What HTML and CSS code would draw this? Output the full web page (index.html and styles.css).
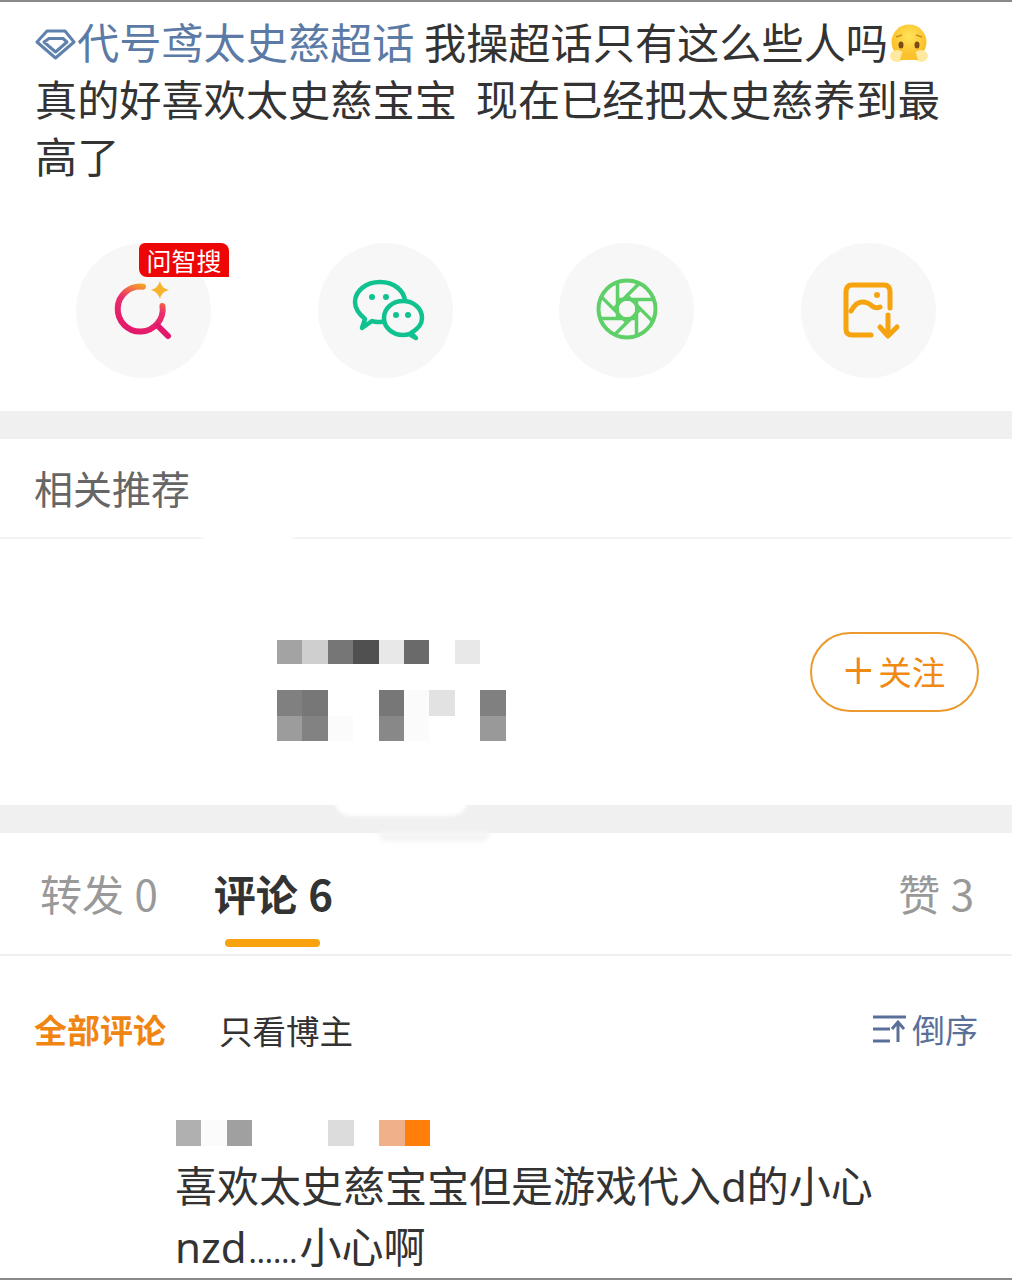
FILE: index.html
```html
<!DOCTYPE html>
<html lang="zh-CN">
<head>
    <meta charset="UTF-8">
    <meta name="viewport" content="width=device-width, initial-scale=1.0">
    <title>代号鸢太史慈超话</title>
    <link rel="stylesheet" href="styles.css">
</head>
<body>
    <div class="page">
        <!-- Post text -->
        <p class="post">
            <span class="topic"><svg class="topic-icon" viewBox="36 24 42 36"><path d="M48 30H66L75 41L56.500 57L38 41Z"/><path d="M50 37.500H64L68 41L56.500 51L45 41Z"/></svg>代号鸢太史慈超话</span>&nbsp;我操超话只有这么些人吗<svg class="emoji" viewBox="0 0 42 42"><defs><radialGradient id="face" cx="50%" cy="35%" r="65%"><stop offset="0" stop-color="#ffe45c"/><stop offset="1" stop-color="#f9b81c"/></radialGradient></defs><circle cx="21" cy="18" r="17.500" fill="url(#face)"/><ellipse cx="13" cy="21" rx="2.500" ry="3.500" fill="#7a4a14"/><ellipse cx="29" cy="21" rx="2.500" ry="3.500" fill="#7a4a14"/><path d="M8 13L14 11M34 13L28 11" stroke="#c98a1c" stroke-width="1.500"/><ellipse cx="9" cy="32" rx="7" ry="6" fill="#ffe9a0"/><ellipse cx="33" cy="32" rx="7" ry="6" fill="#ffe9a0"/><path d="M14 29H28L30 36H12Z" fill="#fbc22e"/></svg>真的好喜欢太史慈宝宝&nbsp;&nbsp;现在已经把太史慈养到最高了
        </p>

        <!-- Share buttons -->
        <div class="share">
            <div class="share-btn">
                <svg class="share-icon" viewBox="76 243 135 135">
                    <defs><linearGradient id="ring" x1="0.700" y1="0" x2="0.300" y2="1"><stop offset="0" stop-color="#f6a623"/><stop offset="0.400" stop-color="#ea2f6a"/><stop offset="1" stop-color="#e3176c"/></linearGradient></defs>
                    <path d="M143 286.700A22.500 22.500 0 1 0 162.500 306" fill="none" stroke="url(#ring)" stroke-width="6" stroke-linecap="round"/>
                    <path d="M158 326L168 336" stroke="#e3176c" stroke-width="6" stroke-linecap="round"/>
                    <path d="M160 281Q161 288 169 290Q161 292 160 299Q158 292 151 290Q158 288 160 281Z" fill="#f7b32b"/>
                </svg>
                <span class="badge">问智搜</span>
            </div>
            <div class="share-btn">
                <svg class="share-icon" viewBox="318 243 135 135">
                    <g fill="#f7f7f7" stroke="#10c28f" stroke-width="4.500" stroke-linejoin="round">
                        <path d="M365 319C359 314 355 309 355 302C355 291 366 282 380 282C394 282 405 291 405 302C405 313 394 322 380 322C377 322 374 322 372 321L362 328Z"/>
                        <path d="M411 333C418 329 422 324 422 318C422 308 413 301 403 301C393 301 384 308 384 318C384 328 393 335 403 335C405 335 407 335 409 334L416 338Z"/>
                    </g>
                    <g fill="#10c28f">
                        <circle cx="372" cy="297" r="3"/><circle cx="386" cy="297" r="3"/>
                        <circle cx="396" cy="315" r="3"/><circle cx="408" cy="315" r="3"/>
                    </g>
                </svg>
            </div>
            <div class="share-btn">
                <svg class="share-icon shutter" viewBox="559 243 135 135">
                    <circle cx="627" cy="309" r="28.500"/>
                    <path id="blade" d="M619 299.500H654"/>
                    <use href="#blade" transform="rotate(45 627 309)"/>
                    <use href="#blade" transform="rotate(90 627 309)"/>
                    <use href="#blade" transform="rotate(135 627 309)"/>
                    <use href="#blade" transform="rotate(180 627 309)"/>
                    <use href="#blade" transform="rotate(225 627 309)"/>
                    <use href="#blade" transform="rotate(270 627 309)"/>
                    <use href="#blade" transform="rotate(315 627 309)"/>
                    <circle class="shutter-hole" cx="627" cy="309" r="8"/>
                </svg>
            </div>
            <div class="share-btn">
                <svg class="share-icon save" viewBox="801 243 135 135">
                    <path d="M871 335H852Q846 335 846 329V292Q846 285 852 285H884Q890 285 890 292V308"/>
                    <path d="M851 311Q856 302 862 302Q868 302 872 306Q876 309 880 307"/>
                    <circle class="save-dot" cx="877" cy="295" r="3"/>
                    <path d="M888 315V335M880 327L888 336L897 327"/>
                </svg>
            </div>
        </div>

        <div class="gap"></div>

        <!-- Recommend -->
        <div class="rec-title">相关推荐</div>
        <div class="rec">
            <div class="rec-names">
                <div class="mosaic mosaic-top">
                    <i class="t-a3"></i><i class="t-cf"></i><i class="t-76"></i><i class="t-50"></i><i class="t-e8"></i><i class="t-6a"></i><i></i><i class="t-e8"></i>
                </div>
                <div class="mosaic mosaic-bottom">
                    <i class="t-80"></i><i class="t-77"></i><i></i><i></i><i class="t-77"></i><i class="t-fb"></i><i class="t-e2"></i><i></i><i class="t-80"></i>
                    <i class="t-9c"></i><i class="t-82"></i><i class="t-fb"></i><i></i><i class="t-88"></i><i class="t-fb"></i><i></i><i></i><i class="t-99"></i>
                </div>
            </div>
            <div class="follow"><span class="follow-plus">+</span>关注</div>
        </div>

        <div class="gap gap-smudge"></div>

        <!-- Tabs -->
        <div class="tabs">
            <span class="tab">转发 0</span>
            <span class="tab tab-active">评论 6</span>
            <span class="tab tab-right">赞 3</span>
        </div>

        <!-- Comment filter -->
        <div class="filter">
            <span class="filter-on">全部评论</span>
            <span class="filter-off">只看博主</span>
            <span class="sort">
                <svg class="sort-icon" viewBox="0 0 36 30"><path d="M1 3H34M1 15H18M1 27H18M26 28V9M20 15L26 8L32 15"/></svg>倒序
            </span>
        </div>

        <!-- Comment -->
        <div class="comment">
            <div class="mosaic mosaic-user">
                <i class="t-b0"></i><i class="t-fb"></i><i class="t-a0"></i><i></i><i></i><i></i><i class="t-dc"></i><i></i><i class="t-peach"></i><i class="t-orange"></i>
            </div>
            <p class="comment-text">喜欢太史慈宝宝但是游戏代入d的小心nzd<span class="dots">……</span>小心啊</p>
        </div>
    </div>
</body>
</html>
```

FILE: styles.css
```css
/* Base */
body {
    margin: 0;
    background-color: #fff;
    color: #333;
    font-family: "Noto Sans CJK SC", "Noto Sans", sans-serif;
}

.page {
    position: relative;
    height: 1280px;
    overflow: hidden;
    box-sizing: border-box;
    border-top: 2px solid #8a8a8a;
    border-bottom: 2px solid #8a8a8a;
}

/* Post */
.post {
    margin: 0;
    height: 190px;
    padding: 10px 56px 0 35px;
    font-size: 42.200px;
    line-height: 57px;
}

.topic {
    color: #5b7ba6;
}

.topic-icon {
    width: 42px;
    height: 36px;
    vertical-align: -2px;
    fill: none;
    stroke: #5f82ad;
    stroke-width: 3;
    stroke-linejoin: round;
}

.emoji {
    width: 42px;
    height: 42px;
    vertical-align: -7px;
}

/* Share */
.share {
    display: flex;
    justify-content: space-between;
    padding: 41px 76px 33px;
}

.share-btn {
    position: relative;
    width: 135px;
    height: 135px;
    border-radius: 50%;
    background-color: #f7f7f7;
}

.share-icon {
    display: block;
    width: 135px;
    height: 135px;
}

.shutter {
    fill: none;
    stroke: #5fd068;
    stroke-width: 4;
}

.shutter path, .shutter use {
    stroke-width: 3.5;
}

.shutter .shutter-hole {
    fill: #f7f7f7;
    stroke: none;
}

.save {
    fill: none;
    stroke: #f5a40f;
    stroke-width: 5;
    stroke-linecap: round;
    stroke-linejoin: round;
}

.save-dot {
    fill: #f5a40f;
    stroke: none;
}

.badge {
    position: absolute;
    top: 0;
    left: 63px;
    width: 90px;
    height: 34px;
    border-radius: 6px 8px 0 8px;
    background-color: #ee0505;
    color: #fff;
    font-size: 25px;
    line-height: 34px;
    text-align: center;
}

.gap {
    height: 28px;
    background-color: #f0f0f0;
}

/* Smudges left in the divider by the screenshot editing */
.gap-smudge {
    position: relative;
}

.gap-smudge::before {
    content: "";
    position: absolute;
    top: -4px;
    left: 335px;
    width: 132px;
    height: 15px;
    border-radius: 0 0 20px 20px;
    background-color: #fff;
    filter: blur(2px);
}

.gap-smudge::after {
    content: "";
    position: absolute;
    top: 26px;
    left: 378px;
    width: 112px;
    height: 11px;
    border-radius: 0 0 10px 10px;
    background-color: #f5f5f5;
    filter: blur(2px);
}

/* Recommend */
.rec-title {
    height: 100px;
    padding-left: 34px;
    box-sizing: border-box;
    border-bottom: 2px solid #f3f3f3;
    border-image: linear-gradient(to right, #f3f3f3 200px, #fff 206px, #fff 290px, #f3f3f3 296px) 1;
    color: #666;
    font-size: 39px;
    line-height: 96px;
}

.rec {
    display: flex;
    align-items: center;
    justify-content: space-between;
    height: 266px;
    padding: 0 33px 0 277px;
    box-sizing: border-box;
}

.rec-names {
    display: flex;
    flex-direction: column;
    gap: 26px;
    margin-top: 37px;
}

.mosaic {
    display: grid;
    grid-auto-rows: 25.500px;
    grid-template-columns: repeat(var(--cols), 25.400px);
}

.mosaic-top {
    --cols: 8;
    grid-auto-rows: 24px;
}

.mosaic-bottom {
    --cols: 9;
}

.mosaic-user {
    --cols: 10;
    grid-auto-rows: 26px;
}

.t-a3 { background-color: #a3a3a3; }
.t-cf { background-color: #cfcfcf; }
.t-76 { background-color: #767676; }
.t-50 { background-color: #505050; }
.t-e8 { background-color: #e8e8e8; }
.t-6a { background-color: #6a6a6a; }
.t-80 { background-color: #808080; }
.t-77 { background-color: #777; }
.t-fb { background-color: #fbfbfb; }
.t-e2 { background-color: #e2e2e2; }
.t-9c { background-color: #9c9c9c; }
.t-82 { background-color: #828282; }
.t-88 { background-color: #888; }
.t-99 { background-color: #999; }
.t-b0 { background-color: #b0b0b0; }
.t-a0 { background-color: #a0a0a0; }
.t-dc { background-color: #dcdcdc; }
.t-peach { background-color: #f0b08a; }
.t-orange { background-color: #ff7f0a; }

.follow {
    display: flex;
    align-items: center;
    justify-content: center;
    width: 169px;
    height: 80px;
    padding-bottom: 3px;
    box-sizing: border-box;
    border: 2px solid #ec9a2e;
    border-radius: 40px;
    color: #f08a12;
    font-size: 33.500px;
}

.follow-plus {
    margin-right: 5px;
    font-family: Roboto, sans-serif;
    font-size: 52px;
    font-weight: 300;
    line-height: 1;
}

/* Tabs */
.tabs {
    display: flex;
    height: 123px;
    padding: 0 38px 0 40px;
    box-sizing: border-box;
    border-bottom: 2px solid #f0f0f0;
    font-size: 42px;
    word-spacing: 1px;
    line-height: 120px;
    color: #999;
}

.tab {
    position: relative;
}

.tab-active {
    margin-left: 56px;
    color: #333;
    font-weight: 700;
}

.tab-active::after {
    content: "";
    position: absolute;
    left: 11px;
    right: 13px;
    bottom: 7px;
    height: 8px;
    border-radius: 4px;
    background-color: #f9a20f;
}

.tab-right {
    margin-left: auto;
}

/* Filter */
.filter {
    display: flex;
    align-items: center;
    height: 146px;
    padding: 0 34px;
    box-sizing: border-box;
    font-size: 33px;
}

.filter-on {
    color: #f08512;
    font-weight: 700;
}

.filter-off {
    margin-left: 53px;
    font-size: 33.500px;
}

.sort {
    display: flex;
    align-items: center;
    margin-left: auto;
    color: #5b7099;
}

.sort-icon {
    width: 36px;
    height: 30px;
    margin-right: 4px;
    fill: none;
    stroke: #5b7099;
    stroke-width: 3;
}

/* Comment */
.comment {
    padding: 18px 136px 0 176px;
}

.comment-text {
    margin: 9px 0 0 -1px;
    font-family: "Noto Sans", "Noto Sans CJK SC", sans-serif;
    font-size: 42px;
    line-height: 61px;
}

.dots {
    margin: 0 2px;
    font-size: 31px;
}
```
